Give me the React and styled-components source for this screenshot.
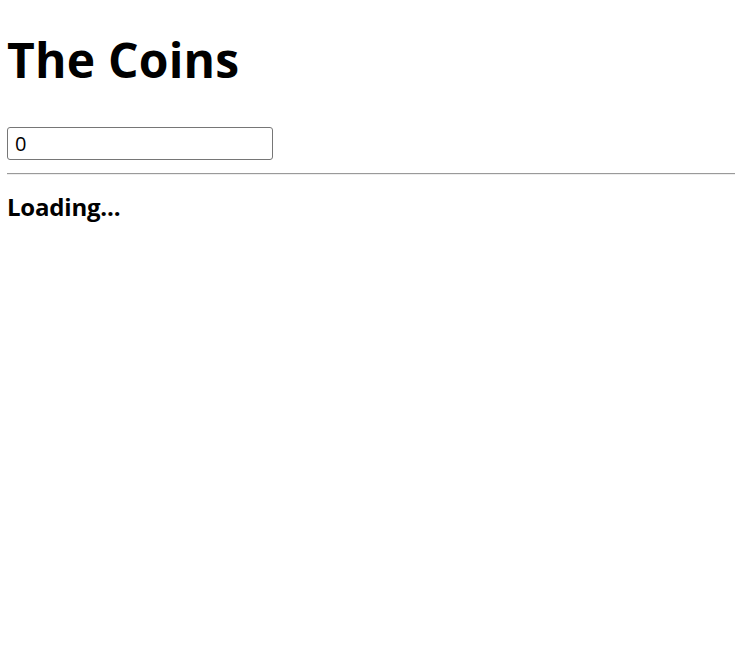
import React from 'react';
import styled, { createGlobalStyle } from 'styled-components';

const GlobalStyle = createGlobalStyle`
  html, body {
    margin: 0;
    padding: 0;
    background: #ffffff;
  }
  body {
    font-family: "Open Sans", "Noto Sans CJK KR", sans-serif;
    color: #000;
  }
`

const Page = styled.div`
  padding: 0 0 0 7px;
  display: flex;
  flex-direction: column;
`

const Title = styled.h1`
  margin: 28px 0 35px;
  font-size: 48px;
  line-height: 64px;
  font-weight: 700;
  letter-spacing: 0.2px;
`

const Amount = styled.input`
  box-sizing: border-box;
  width: 266px;
  height: 33px;
  margin: 0;
  padding: 0 7px;
  border: 1px solid #767676;
  border-radius: 3px;
  font-family: "Open Sans", "Noto Sans CJK KR", sans-serif;
  font-size: 20px;
  color: #000;
  background: #fff;
  outline: none;
`

const Divider = styled.hr`
  margin: 13px 0 0;
  height: 0;
  border: none;
  border-top: 1px solid #9a9a9a;
  border-bottom: 1px solid #eeeeee;
`

const Status = styled.h3`
  margin: 16px 0 0;
  font-size: 24px;
  line-height: 32px;
  font-weight: 700;
  letter-spacing: -0.2px;
`

export default function App() {
  return (
    <>
      <GlobalStyle />
      <Page>
        <Title>The Coins</Title>
        <div>
          <Amount type="number" defaultValue={0} />
        </div>
        <Divider />
        <Status>Loading...</Status>
      </Page>
    </>
  );
}
